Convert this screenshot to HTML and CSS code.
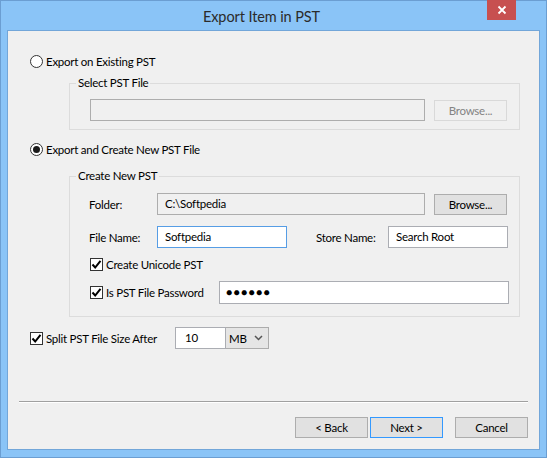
FILE: index.html
```html
<!DOCTYPE html>
<html>
<head>
<meta charset="utf-8">
<link rel="stylesheet" href="styles.css">
</head>
<body>
<div class="window">
  <div class="titlebar">
    <div class="title">Export Item in PST</div>
    <div class="close"><svg width="10" height="10" viewBox="0 0 10 10"><path d="M1.5 1.5 L8.5 8.5 M8.5 1.5 L1.5 8.5" stroke="#fff" stroke-width="1.8"/></svg></div>
  </div>
  <div class="client">
    <div class="row radio-row r1"><span class="radio"></span><span>Export on Existing PST</span></div>
    <fieldset class="group g1">
      <legend>Select PST File</legend>
      <div class="gbody">
        <div class="line">
          <div class="input disabled path1"></div>
          <div class="btn btn-disabled">Browse...</div>
        </div>
      </div>
    </fieldset>
    <div class="row radio-row r2"><span class="radio on"></span><span>Export and Create New PST File</span></div>
    <fieldset class="group g2">
      <legend>Create New PST</legend>
      <div class="gbody">
        <div class="line l-folder">
          <span class="lbl lbl-w">Folder:</span>
          <div class="input disabled path2">C:\Softpedia</div>
          <div class="btn browse2">Browse...</div>
        </div>
        <div class="line l-name">
          <span class="lbl lbl-w">File Name:</span>
          <div class="input focus fname">Softpedia</div>
          <span class="lbl store-lbl">Store Name:</span>
          <div class="input sname">Search Root</div>
        </div>
        <div class="line l-uni">
          <span class="check"><svg width="11" height="11" viewBox="0 0 11 11"><path d="M1.5 5.5 L4.2 8.5 L9.5 1.8" fill="none" stroke="#000" stroke-width="2"/></svg></span>
          <span class="clbl">Create Unicode PST</span>
        </div>
        <div class="line l-pw">
          <span class="check"><svg width="11" height="11" viewBox="0 0 11 11"><path d="M1.5 5.5 L4.2 8.5 L9.5 1.8" fill="none" stroke="#000" stroke-width="2"/></svg></span>
          <span class="clbl pwlbl">Is PST File Password</span>
          <div class="input pw">●●●●●●</div>
        </div>
      </div>
    </fieldset>
    <div class="line l-split">
      <span class="check"><svg width="11" height="11" viewBox="0 0 11 11"><path d="M1.5 5.5 L4.2 8.5 L9.5 1.8" fill="none" stroke="#000" stroke-width="2"/></svg></span>
      <span class="clbl splitlbl">Split PST File Size After</span>
      <div class="input size">10</div>
      <div class="select"><span>MB</span><svg width="9" height="6" viewBox="0 0 9 6"><path d="M1 1 L4.5 4.5 L8 1" fill="none" stroke="#555" stroke-width="1.5"/></svg></div>
    </div>
    <div class="sep"></div>
    <div class="buttons">
      <div class="btn bbtn">&lt; Back</div>
      <div class="btn bbtn next">Next &gt;</div>
      <div class="btn bbtn cancel">Cancel</div>
    </div>
  </div>
</div>
</body>
</html>
```
FILE: styles.css
```css
* { box-sizing: border-box; }
html, body { margin: 0; padding: 0; }
body {
  font-family: Lato, "Noto Sans", sans-serif;
  font-size: 11.5px;
  letter-spacing: -0.25px;
  color: #000;
  width: 547px;
  height: 458px;
  overflow: hidden;
}
.window {
  width: 547px;
  height: 458px;
  border: 1px solid #6b9ed2;
  background: #8ac4f7;
  padding: 0 6px 7px 6px;
  display: flex;
  flex-direction: column;
}
.titlebar {
  height: 29px;
  display: flex;
  align-items: flex-start;
  flex-shrink: 0;
}
.title {
  flex: 1;
  text-align: center;
  font-size: 14.5px;
  letter-spacing: -0.1px;
  color: #2b2b2b;
  line-height: 31px;
  padding-left: 29px;
}
.close {
  width: 29px;
  height: 20px;
  background: #c75050;
  margin-right: 24px;
  margin-top: -1px;
  display: flex;
  align-items: center;
  justify-content: center;
}
.client {
  flex: 1;
  background: #f0f0f0;
  border: 1px solid #72a6d9;
  display: flex;
  flex-direction: column;
  align-items: flex-start;
}
.row { display: flex; align-items: center; }
.radio-row { height: 16px; margin-left: 22px; gap: 3px; }
.r1 { margin-top: 22px; }
.r2 { margin-top: 11px; }
.radio {
  width: 13px; height: 13px;
  border: 1px solid #333;
  border-radius: 50%;
  background: #fff;
  display: flex; align-items: center; justify-content: center;
}
.radio.on::after {
  content: "";
  width: 7px; height: 7px;
  border-radius: 50%;
  background: #1a1a1a;
}
.group {
  margin-left: 61px;
  width: 451px;
  border: 1px solid #dcdcdc;
  min-width: 0;
  padding: 0;
}
legend {
  padding: 0 2px;
  margin-left: 6px;
  line-height: 16px;
  height: 16px;
  color: #000;
}
.g1 { margin-top: 6px; }
.g1 .gbody { padding: 8px 0 8px 20px; }
.g2 { margin-top: 11px; }
.g2 .gbody { padding: 9px 0 12px 19px; }
.line { display: flex; align-items: center; }
.input {
  height: 22px;
  border: 1px solid #abadb3;
  background: #fff;
  padding: 0 7px;
  line-height: 20px;
  white-space: nowrap;
}
.input.disabled { background: #f0f0f0; border-color: #adadad; }
.input.focus { border-color: #569de5; }
.path1 { width: 335px; }
.btn {
  height: 21px;
  width: 73px;
  border: 1px solid #adadad;
  background: #e1e1e1;
  display: flex;
  align-items: center;
  justify-content: center;
  color: #000;
}
.btn-disabled {
  background: #f0f0f0;
  border-color: #d9d9d9;
  color: #838383;
  margin-left: 9px;
}
.lbl-w { width: 68px; }
.path2 { width: 268px; }
.browse2 { margin-left: 9px; }
.l-name { margin-top: 11px; }
.fname { width: 130px; }
.store-lbl { margin-left: 29px; width: 72px; }
.sname { width: 120px; }
.check {
  width: 13px; height: 13px;
  border: 1px solid #333;
  background: #fff;
  display: flex; align-items: center; justify-content: center;
}
.clbl { margin-left: 3px; }
.l-uni { margin-top: 9px; margin-left: 1px; height: 14px; }
.l-pw { margin-top: 10px; margin-left: 1px; }
.pwlbl { width: 113px; }
.pw { width: 290px; height: 23px; font-size: 10.5px; letter-spacing: 1.2px; padding-left: 6px; }
.l-split { margin-left: 22px; margin-top: 10px; }
.splitlbl { width: 129px; }
.size { width: 51px; padding-left: 9px; }
.select {
  width: 43px;
  height: 22px;
  border: 1px solid #acacac;
  border-left: none;
  background: #e5e5e5;
  display: flex;
  align-items: center;
  justify-content: space-between;
  padding: 0 5px 0 3px;
}
.sep {
  margin-top: 52px;
  margin-left: 11px;
  width: 509px;
  height: 2px;
  border-top: 1px solid #a0a0a0;
  border-bottom: 1px solid #ffffff;
}
.buttons {
  display: flex;
  margin-top: 14px;
  margin-left: 287px;
}
.next { margin-left: 2px; border-color: #3399ff; }
.cancel { margin-left: 12px; }
```
